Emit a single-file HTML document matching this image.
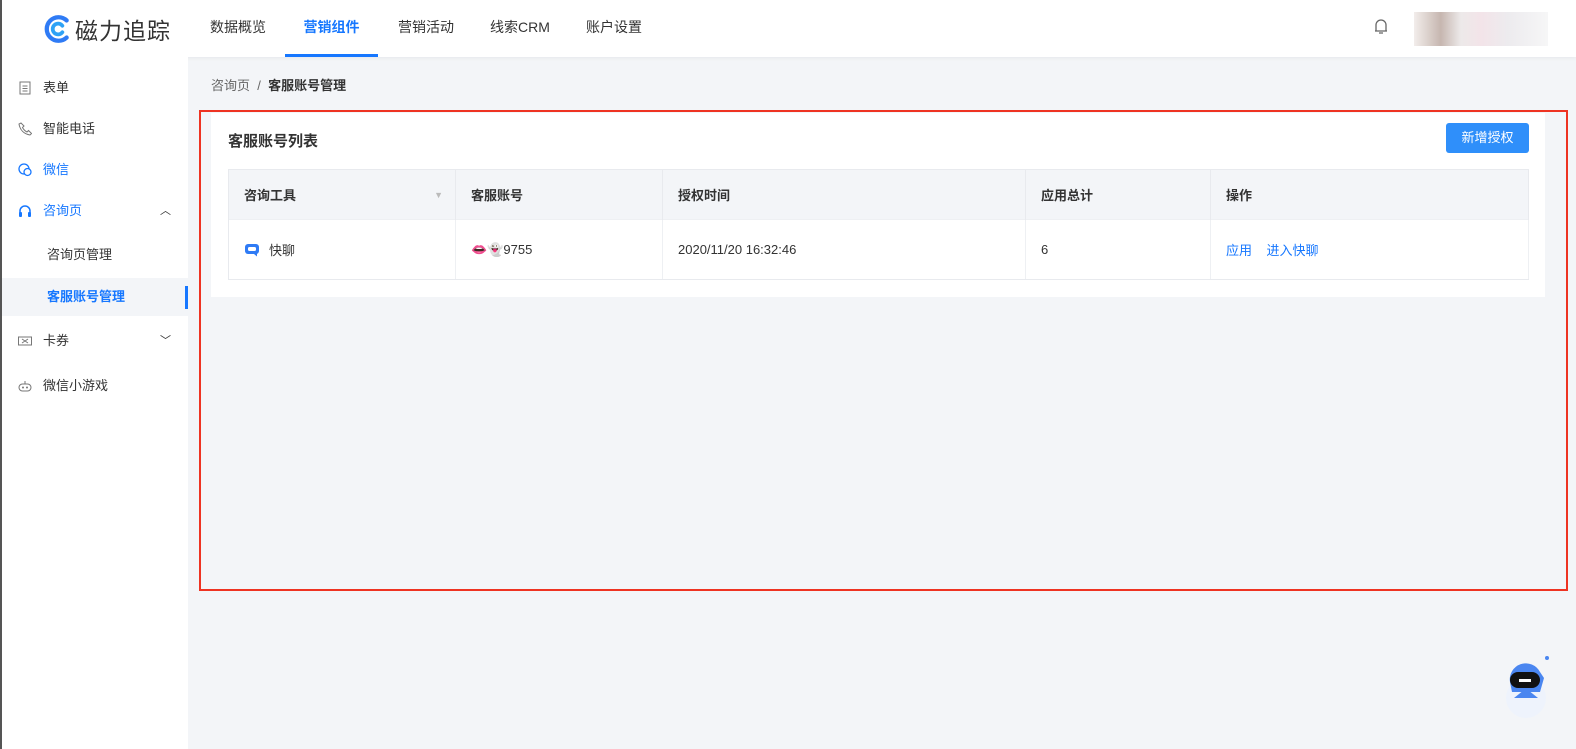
<!DOCTYPE html>
<html><head><meta charset="utf-8"><style>
*{margin:0;padding:0;box-sizing:border-box}
html{overflow:hidden}
body{width:1576px;height:749px;overflow:hidden;background:#f3f5f8;font-family:"Liberation Sans","Noto Sans CJK SC",sans-serif;font-size:13px;color:#333;position:relative}
.lb{position:absolute;left:0;top:0;width:2px;height:749px;background:#555}
.hdr{position:absolute;left:2px;top:0;width:1574px;height:57px;background:#fff;box-shadow:0 1px 4px rgba(0,0,0,.06)}
.logo{position:absolute;left:40px;top:12px;display:flex;align-items:center}
.logo span{font-size:23px;color:#333;margin-left:3px;letter-spacing:1px}
.nav{position:absolute;top:0;height:57px;line-height:55px;font-size:14px;color:#333}
.nav.act{color:#1677ff;font-weight:bold;border-bottom:3px solid #1677ff}
.side{position:absolute;left:2px;top:57px;width:186px;height:692px;background:#fff}
.mi{position:absolute;left:0;width:186px;height:38px;line-height:38px;font-size:13px;color:#333}
.mi .ic{position:absolute;left:16px;top:12px;width:14px;height:14px}
.mi .t{position:absolute;left:41px}
.blue{color:#1677ff}
.crumb{position:absolute;left:211px;top:75px;font-size:13px;color:#666}
.crumb b{color:#333}
.card{position:absolute;left:211px;top:113px;width:1334px;height:184px;background:#fff}
.red{position:absolute;left:199px;top:110px;width:1369px;height:481px;border:2px solid #ee3322}
.btn{position:absolute;left:1446px;top:123px;width:83px;height:30px;background:#2f8ffa;color:#fff;border-radius:3px;text-align:center;line-height:30px;font-size:13px}
table{position:absolute;left:228px;top:169px;width:1301px;border-collapse:collapse;font-size:13px}
th{background:#f3f5f8;height:50px;text-align:left;padding-left:15px;font-weight:bold;color:#333;border-right:1px solid #e8eaee;border-top:1px solid #e8eaee}
td{height:60px;padding-left:15px;border-right:1px solid #eef0f3;border-top:1px solid #eef0f3;border-bottom:1px solid #e8eaee;color:#333}
th:first-child,td:first-child{border-left:1px solid #e8eaee}
</style></head><body>
<div class="lb"></div>
<div class="hdr">
 <div class="logo"><svg width="30" height="30" viewBox="0 0 28 28"><path d="M23 6A11 11 0 1 0 23 22" fill="none" stroke="#2f7bf5" stroke-width="4" stroke-linecap="round"/><path d="M19 11A5 5 0 1 0 19 17" fill="none" stroke="#2fa2f5" stroke-width="3.5" stroke-linecap="round"/></svg><span>磁力追踪</span></div>
 <div class="nav" style="left:208px">数据概览</div>
 <div class="nav act" style="left:283px;width:93px;text-align:center">营销组件</div>
 <div class="nav" style="left:396px">营销活动</div>
 <div class="nav" style="left:488px">线索CRM</div>
 <div class="nav" style="left:584px">账户设置</div>
 <svg style="position:absolute;left:1372px;top:18px" width="14" height="17" viewBox="0 0 14 17"><path d="M2 13V7a5 5 0 0 1 10 0v6M1 13h12M5 15h4" fill="none" stroke="#666" stroke-width="1.3"/></svg>
 <div style="position:absolute;left:1412px;top:12px;width:134px;height:34px;background:linear-gradient(90deg,#efe9e6,#b8a49c 20%,#e8e4e4 35%,#f0dde3 50%,#e8e6ea 70%,#f4f4f5);opacity:.8"></div>
</div>
<div class="side">
 <div class="mi" style="top:12px"><svg class="ic" viewBox="0 0 14 14"><rect x="2" y="1" width="10" height="12" fill="none" stroke="#777"/><path d="M4.5 5h5M4.5 7.5h5M4.5 10h5" stroke="#777"/></svg><span class="t">表单</span></div>
 <div class="mi" style="top:53px"><svg class="ic" viewBox="0 0 14 14"><path d="M3 1l3 3-1.5 1.5c1 2 2.5 3.5 4.5 4.5L10.5 8.5l3 3L12 13C6 12 2 8 1 2z" fill="none" stroke="#777"/></svg><span class="t">智能电话</span></div>
 <div class="mi blue" style="top:94px"><svg class="ic" viewBox="0 0 14 14"><circle cx="6" cy="6" r="5" fill="none" stroke="#1677ff" stroke-width="1.3"/><circle cx="9.5" cy="9" r="3.5" fill="#fff" stroke="#1677ff" stroke-width="1.3"/></svg><span class="t">微信</span></div>
 <div class="mi blue" style="top:135px"><svg class="ic" viewBox="0 0 14 14"><path d="M2 10V7a5 5 0 0 1 10 0v3" fill="none" stroke="#1677ff" stroke-width="1.5"/><rect x="1" y="8" width="3" height="5" rx="1" fill="#1677ff"/><rect x="10" y="8" width="3" height="5" rx="1" fill="#1677ff"/></svg><span class="t">咨询页</span><span style="position:absolute;left:158px;color:#333;font-size:11px">︿</span></div>
 <div class="mi" style="top:179px"><span class="t" style="left:45px">咨询页管理</span></div>
 <div class="mi blue" style="top:221px;background:#f3f5f8;font-weight:bold"><span class="t" style="left:45px">客服账号管理</span><span style="position:absolute;left:183px;top:8px;width:3px;height:23px;background:#1677ff"></span></div>
 <div class="mi" style="top:265px"><svg class="ic" viewBox="0 0 14 14"><rect x="0.5" y="3" width="13" height="8" fill="none" stroke="#777"/><path d="M4 5l6 4M10 5l-6 4" stroke="#777"/></svg><span class="t">卡券</span><span style="position:absolute;left:158px;color:#333;font-size:11px">﹀</span></div>
 <div class="mi" style="top:310px"><svg class="ic" viewBox="0 0 14 14"><rect x="1" y="5" width="12" height="7" rx="3.5" fill="none" stroke="#777"/><circle cx="5" cy="8.5" r="1" fill="#777"/><circle cx="9" cy="8.5" r="1" fill="#777"/><path d="M7 5V2" stroke="#777"/></svg><span class="t">微信小游戏</span></div>
</div>
<div class="crumb">咨询页 &nbsp;/&nbsp; <b>客服账号管理</b></div>
<div class="card"><div style="position:absolute;left:17px;top:17px;font-size:15px;font-weight:bold;color:#333">客服账号列表</div></div>
<div class="btn">新增授权</div>
<table>
<tr><th style="width:227px;position:relative">咨询工具<span style="position:absolute;right:12px;top:20px;color:#bbb;font-size:9px">▼</span></th><th style="width:207px">客服账号</th><th style="width:363px">授权时间</th><th style="width:185px">应用总计</th><th>操作</th></tr>
<tr><td><svg width="16" height="14" viewBox="0 0 16 14" style="vertical-align:-2px;margin-right:9px"><rect x="1" y="1" width="14" height="10" rx="3" fill="#2f7bf5"/><path d="M10 11l3 2.5V10" fill="#2f7bf5"/><rect x="4" y="4" width="8" height="4" rx="1.5" fill="#fff"/></svg>快聊</td><td>👄👻9755</td><td>2020/11/20 16:32:46</td><td>6</td><td><span class="blue">应用</span>&nbsp;&nbsp;&nbsp;&nbsp;<span class="blue">进入快聊</span></td></tr>
</table>
<div class="red"></div>
<svg style="position:absolute;left:1502px;top:652px" width="52" height="70" viewBox="0 0 52 70"><circle cx="24" cy="46" r="20" fill="#eef3fc"/><path d="M8 30a16 16 0 0 1 30-10l4 6-4 14H10z" fill="#4a86f0"/><circle cx="45" cy="6" r="2" fill="#4a86f0"/><rect x="8" y="20" width="30" height="16" rx="8" fill="#111"/><rect x="17" y="27" width="12" height="3" fill="#fff"/><path d="M12 46l10-8h4l10 8z" fill="#4a86f0"/></svg>
</body></html>
